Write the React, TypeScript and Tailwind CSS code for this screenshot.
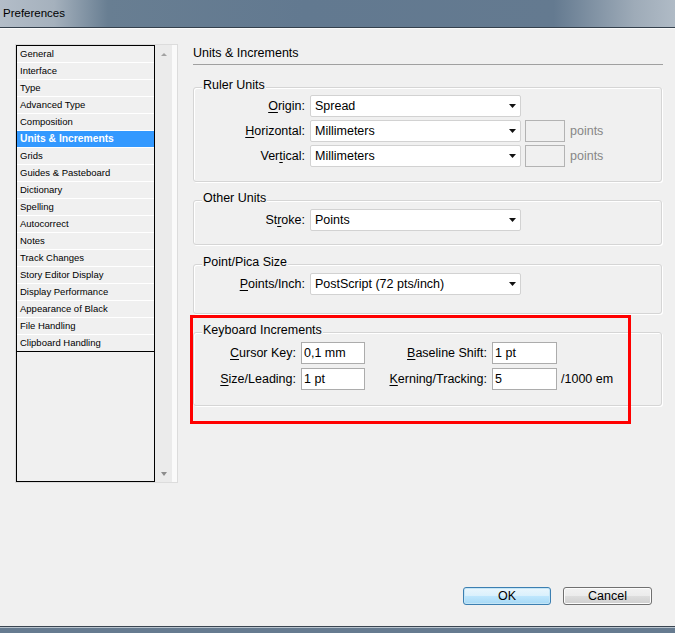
import React from "react";

const listItems = [
  "General",
  "Interface",
  "Type",
  "Advanced Type",
  "Composition",
  "Units & Increments",
  "Grids",
  "Guides & Pasteboard",
  "Dictionary",
  "Spelling",
  "Autocorrect",
  "Notes",
  "Track Changes",
  "Story Editor Display",
  "Display Performance",
  "Appearance of Black",
  "File Handling",
  "Clipboard Handling",
];

// label with an underlined access key
function Mn({ text, at }: { text: string; at: number }) {
  return (
    <>
      {text.slice(0, at)}
      <span className="underline underline-offset-[2px]">{text[at]}</span>
      {text.slice(at + 1)}
    </>
  );
}

function Arrow() {
  return (
    <svg width="7" height="4" viewBox="0 0 7 4">
      <path d="M0 0H7L3.5 4Z" fill="#111" />
    </svg>
  );
}

function Select({ value }: { value: string }) {
  return (
    <div className="flex h-[22px] w-[211px] items-center justify-between rounded-[2px] border border-[#d2d2d2] bg-white pl-[4px] pr-[4px]">
      <span>{value}</span>
      <Arrow />
    </div>
  );
}

function Group({
  title,
  className,
  children,
}: {
  title: string;
  className: string;
  children: React.ReactNode;
}) {
  return (
    <div
      className={
        "relative mr-[1px] rounded-[3px] border border-[#d5d5d5] shadow-[inset_1px_1px_0_#fff,1px_1px_0_#fff] " +
        className
      }
    >
      <span className="absolute -top-[10px] left-[8px] bg-[#f0f0f0] px-[1px] leading-[15px]">
        {title}
      </span>
      {children}
    </div>
  );
}

function Input({ value, w }: { value: string; w: string }) {
  return (
    <div
      className={
        "flex h-[22px] items-center border border-[#acacac] bg-white pl-[2px] " + w
      }
    >
      {value}
    </div>
  );
}

export default function App() {
  return (
    <div className="flex h-[633px] w-[675px] flex-col overflow-hidden bg-[#f0f0f0] font-['Liberation_Sans',Arial,sans-serif] text-black">
      {/* title bar */}
      <div className="flex h-[28px] items-center border-b border-[#34404c] bg-[linear-gradient(90deg,#b3bdc8_0%,#a5b1bd_8%,#687e92_16%,#627990_45%,#647a90_82%,#9eabb8_94%,#b0bbc6_100%)] pl-[3px] text-[11.5px]">
        Preferences
      </div>

      <div className="flex flex-1 flex-col border-t border-[#fafafa]">
        <div className="flex pl-[15px] pt-[15px]">
          {/* category list */}
          <div className="flex h-[439px] w-[163px] border border-[#dcdcdc]">
            <div className="flex w-[139px] flex-col border border-black">
              {listItems.map((item, i) =>
                item === "Units & Increments" ? (
                  <div
                    key={item}
                    className="h-[17px] border-b border-white bg-[#3399ff] pl-[3px] text-[10.3px] font-bold leading-[15px] text-white"
                  >
                    {item}
                  </div>
                ) : (
                  <div
                    key={item}
                    className={
                      "h-[17px] border-b pl-[3px] text-[9.5px] leading-[15px] " +
                      (i === listItems.length - 1 ? "border-black" : "border-white")
                    }
                  >
                    {item}
                  </div>
                )
              )}
            </div>
            <div className="flex flex-1 flex-col justify-between border-r-[5px] border-[#fafafa] bg-[#ebebeb] pb-[6px] pl-[6px] pt-[8px]">
              <svg width="6" height="3" viewBox="0 0 6 3">
                <path d="M3 0L6 3H0Z" fill="#a2a2a2" />
              </svg>
              <svg width="6" height="4" viewBox="0 0 6 4">
                <path d="M0 0H6L3 4Z" fill="#8c8c8c" />
              </svg>
            </div>
          </div>

          {/* settings panel */}
          <div className="ml-[15px] mt-[1px] flex w-[470px] flex-col text-[12.5px]">
            <div className="border-b border-[#a0a0a0] pb-[3px] pt-[1px] leading-[15px]">
              Units &amp; Increments
            </div>

            <Group title="Ruler Units" className="mt-[22px] pb-[14px] pt-[7px]">
              <div className="flex flex-col gap-[3px]">
                <div className="flex items-center">
                  <span className="w-[111px] text-right">
                    <Mn text="Origin:" at={0} />
                  </span>
                  <div className="ml-[5px]">
                    <Select value="Spread" />
                  </div>
                </div>
                <div className="flex items-center">
                  <span className="w-[111px] text-right">
                    <Mn text="Horizontal:" at={0} />
                  </span>
                  <div className="ml-[5px]">
                    <Select value="Millimeters" />
                  </div>
                  <div className="ml-[4px] h-[22px] w-[40px] border border-[#b3b3b3] bg-[#f0f0f0]" />
                  <span className="ml-[5px] text-[#878787]">points</span>
                </div>
                <div className="flex items-center">
                  <span className="w-[111px] text-right">
                    <Mn text="Vertical:" at={3} />
                  </span>
                  <div className="ml-[5px]">
                    <Select value="Millimeters" />
                  </div>
                  <div className="ml-[4px] h-[22px] w-[40px] border border-[#b3b3b3] bg-[#f0f0f0]" />
                  <span className="ml-[5px] text-[#878787]">points</span>
                </div>
              </div>
            </Group>

            <Group title="Other Units" className="mt-[18px] pb-[13px] pt-[8px]">
              <div className="flex items-center">
                <span className="w-[111px] text-right">
                  <Mn text="Stroke:" at={2} />
                </span>
                <div className="ml-[5px]">
                  <Select value="Points" />
                </div>
              </div>
            </Group>

            <Group title="Point/Pica Size" className="mt-[19px] pb-[18px] pt-[8px]">
              <div className="flex items-center">
                <span className="w-[111px] text-right">
                  <Mn text="Points/Inch:" at={0} />
                </span>
                <div className="ml-[5px]">
                  <Select value="PostScript (72 pts/inch)" />
                </div>
              </div>
            </Group>

            <Group title="Keyboard Increments" className="mt-[18px] pb-[15px] pt-[9px]">
              <div className="flex flex-col gap-[4px]">
                <div className="flex items-center">
                  <span className="w-[102px] text-right">
                    <Mn text="Cursor Key:" at={0} />
                  </span>
                  <div className="ml-[5px]">
                    <Input value="0,1 mm" w="w-[64px]" />
                  </div>
                  <span className="w-[122px] text-right">
                    <Mn text="Baseline Shift:" at={0} />
                  </span>
                  <div className="ml-[5px]">
                    <Input value="1 pt" w="w-[65px]" />
                  </div>
                </div>
                <div className="flex items-center">
                  <span className="w-[102px] text-right">
                    <Mn text="Size/Leading:" at={0} />
                  </span>
                  <div className="ml-[5px]">
                    <Input value="1 pt" w="w-[64px]" />
                  </div>
                  <span className="w-[122px] text-right">
                    <Mn text="Kerning/Tracking:" at={0} />
                  </span>
                  <div className="ml-[5px]">
                    <Input value="5" w="w-[65px]" />
                  </div>
                  <span className="ml-[4px]">/1000 em</span>
                </div>
              </div>
              {/* red highlight */}
              <div className="pointer-events-none absolute -left-[4px] -top-[18px] h-[109px] w-[441px] border-[3px] border-[#ff0000]" />
            </Group>
          </div>
        </div>

        {/* buttons */}
        <div className="mt-auto flex justify-end gap-[12px] pb-[21px] pr-[23px] text-[12.5px]">
          <button className="flex h-[18px] w-[88px] items-center justify-center rounded-[3px] border border-[#3c7fb1] bg-[linear-gradient(180deg,#eaf6fd_0%,#d9f0fc_50%,#bee6fd_51%,#a7d9f5_100%)] shadow-[inset_0_0_0_1px_#c4e5f6]">
            OK
          </button>
          <button className="flex h-[18px] w-[89px] items-center justify-center rounded-[3px] border border-[#707070] bg-[linear-gradient(180deg,#f2f2f2_0%,#ebebeb_50%,#dddddd_51%,#cfcfcf_100%)] shadow-[inset_0_0_0_1px_#fcfcfc]">
            Cancel
          </button>
        </div>
      </div>

      {/* bottom frame */}
      <div className="h-[7px] border-t border-[#3b4652] bg-[#667b90] shadow-[inset_0_1px_0_#b9c4ce]" />
    </div>
  );
}
